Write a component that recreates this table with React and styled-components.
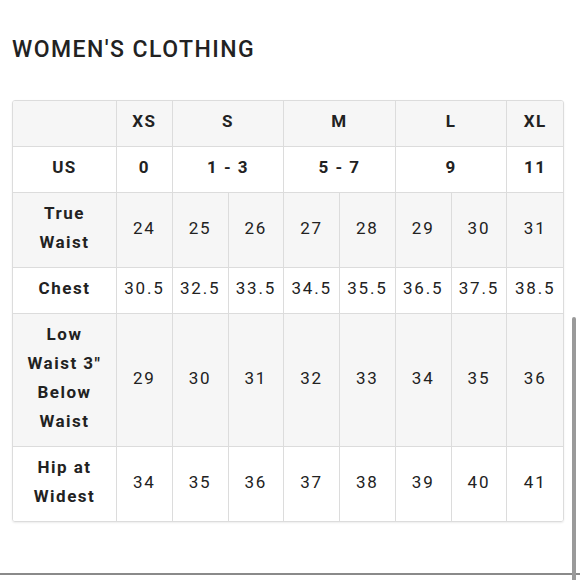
import React from "react";
import styled, { createGlobalStyle } from "styled-components";

const Global = createGlobalStyle`
  html, body { margin: 0; padding: 0; background: #fff; }
  body { font-family: Roboto, "Noto Sans", Arial, sans-serif; color: #222; }
`;

const Page = styled.div`
  position: relative;
  width: 580px;
  height: 580px;
  overflow: hidden;
  padding: 36px 0 0 12px;
  box-sizing: border-box;
`;

const Title = styled.h2`
  margin: 0 0 36px;
  font-size: 23px;
  line-height: 28px;
  font-weight: 500;
  letter-spacing: 1.45px;
  color: #222;
`;

const Table = styled.table`
  border-collapse: separate;
  border-spacing: 0;
  table-layout: fixed;
  width: 552px;
  border: 1px solid #dcdcdc;
  border-radius: 3px;
  box-shadow: 0 1px 2px rgba(0, 0, 0, 0.08);
  overflow: hidden;
`;

const Row = styled.tr`
  background: ${(p) => (p.$shade ? "#f6f6f6" : "#fff")};
`;

const Cell = styled.td`
  padding: 6px 4px 10px;
  text-align: center;
  vertical-align: middle;
  font-size: 17px;
  line-height: 29px;
  letter-spacing: ${(p) => (p.$bold ? "1.5px" : "1.8px")};
  font-weight: ${(p) => (p.$bold ? 700 : 400)};
  color: #222;
  border-right: 1px solid #dcdcdc;
  border-bottom: 1px solid #dcdcdc;
  &:last-child { border-right: none; }
  tr:last-child > & { border-bottom: none; }
`;

const Line = styled.div`
  position: absolute;
  left: 0;
  right: 0;
  top: 573px;
  height: 2px;
  background: #8a8a8a;
`;

const Thumb = styled.div`
  position: absolute;
  left: 572px;
  top: 317px;
  width: 4px;
  height: 270px;
  border-radius: 2px;
  background: #9a9a9a;
`;

const waist = [24, 25, 26, 27, 28, 29, 30, 31];
const chest = ["30.5", "32.5", "33.5", "34.5", "35.5", "36.5", "37.5", "38.5"];
const low = [29, 30, 31, 32, 33, 34, 35, 36];
const hip = [34, 35, 36, 37, 38, 39, 40, 41];

const Values = ({ values }) => values.map((v, i) => <Cell key={i}>{v}</Cell>);

export default function App() {
  return (
    <>
      <Global />
      <Page>
        <Title>WOMEN'S CLOTHING</Title>
        <Table>
          <colgroup>
            <col style={{ width: 104 }} />
            {Array.from({ length: 8 }).map((_, i) => (
              <col key={i} style={{ width: 55.75 }} />
            ))}
          </colgroup>
          <tbody>
            <Row $shade>
              <Cell $bold />
              <Cell $bold>XS</Cell>
              <Cell $bold colSpan={2}>S</Cell>
              <Cell $bold colSpan={2}>M</Cell>
              <Cell $bold colSpan={2}>L</Cell>
              <Cell $bold>XL</Cell>
            </Row>
            <Row>
              <Cell $bold>US</Cell>
              <Cell $bold>0</Cell>
              <Cell $bold colSpan={2}>1 - 3</Cell>
              <Cell $bold colSpan={2}>5 - 7</Cell>
              <Cell $bold colSpan={2}>9</Cell>
              <Cell $bold>11</Cell>
            </Row>
            <Row $shade>
              <Cell $bold>True<br />Waist</Cell>
              <Values values={waist} />
            </Row>
            <Row>
              <Cell $bold>Chest</Cell>
              <Values values={chest} />
            </Row>
            <Row $shade>
              <Cell $bold>Low<br />Waist 3"<br />Below<br />Waist</Cell>
              <Values values={low} />
            </Row>
            <Row>
              <Cell $bold>Hip at<br />Widest</Cell>
              <Values values={hip} />
            </Row>
          </tbody>
        </Table>
        <Line />
        <Thumb />
      </Page>
    </>
  );
}
